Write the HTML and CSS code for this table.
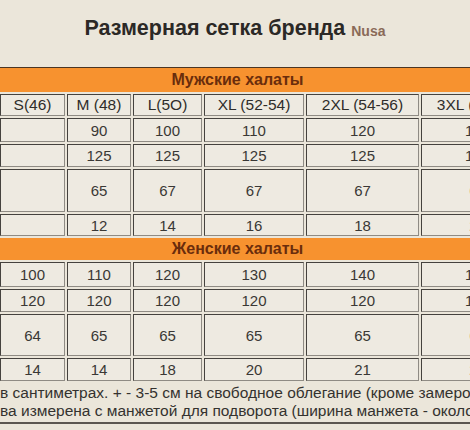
FILE: index.html
```html
<!DOCTYPE html>
<html lang="ru">
<head>
<meta charset="utf-8">
<title>Размерная сетка бренда Nusa</title>
<link rel="stylesheet" href="styles.css">
</head>
<body>
<div class="page">
  <h1 class="title">Размерная сетка бренда <span class="brand">Nusa</span></h1>
  <div class="sheet">
    <table class="sizes">
      <colgroup>
        <col class="c0"><col class="c1"><col class="c2"><col class="c3"><col class="c4"><col class="c5"><col class="c6">
      </colgroup>
      <tbody>
        <tr class="band band-men"><th colspan="7">Мужские халаты</th></tr>
        <tr class="head">
          <td></td><td>S(46)</td><td>M (48)</td><td>L(5O)</td><td>XL (52-54)</td><td>2XL (54-56)</td><td>3XL (56-58)</td>
        </tr>
        <tr class="r-a"><td></td><td></td><td>90</td><td>100</td><td>110</td><td>120</td><td>130</td></tr>
        <tr class="r-b"><td></td><td></td><td>125</td><td>125</td><td>125</td><td>125</td><td>125</td></tr>
        <tr class="r-c"><td></td><td></td><td>65</td><td>67</td><td>67</td><td>67</td><td>67</td></tr>
        <tr class="r-d"><td></td><td></td><td>12</td><td>14</td><td>16</td><td>18</td><td>20</td></tr>
        <tr class="band band-women"><th colspan="7">Женские халаты</th></tr>
        <tr class="r-e"><td></td><td>100</td><td>110</td><td>120</td><td>130</td><td>140</td><td>150</td></tr>
        <tr class="r-f"><td></td><td>120</td><td>120</td><td>120</td><td>120</td><td>120</td><td>120</td></tr>
        <tr class="r-g"><td></td><td>64</td><td>65</td><td>65</td><td>65</td><td>65</td><td>66</td></tr>
        <tr class="r-h"><td></td><td>14</td><td>14</td><td>18</td><td>20</td><td>21</td><td>22</td></tr>
      </tbody>
    </table>
    <div class="notes">
      <p class="note">в сантиметрах. + - 3-5 см на свободное облегание (кроме замеров</p>
      <p class="note">ва измерена с манжетой для подворота (ширина манжета - около</p>
    </div>
  </div>
</div>
</body>
</html>
```
FILE: styles.css
```css
html, body {
  margin: 0;
  padding: 0;
  overflow: hidden;
  background: #ebe6da;
}
.page {
  width: 470px;
  height: 430px;
  overflow: hidden;
  font-family: "Liberation Sans", Arial, sans-serif;
  color: #333;
}
.title {
  margin: 0;
  height: 67px;
  display: flex;
  align-items: center;
  justify-content: center;
  font-size: 21.5px;
  font-weight: bold;
  color: #2b2926;
  padding-bottom: 10px;
  box-sizing: border-box;
}
.brand {
  font-size: 14px;
  color: #8a6a58;
  margin-left: 6px;
  align-self: center;
  padding-top: 5px;
}
.sheet {
  border-top: 1px solid #4b3522;
  border-bottom: 2px solid #5b5650;
  height: 357px;
  box-sizing: border-box;
}
.sizes {
  border-collapse: separate;
  border-spacing: 2px;
  margin-left: -61px;
  margin-top: -2px;
  table-layout: fixed;
  width: 596px;
  font-size: 15px;
}
.c0 { width: 57px; }
.c1 { width: 65px; }
.c2 { width: 64px; }
.c3 { width: 69px; }
.c4 { width: 100px; }
.c5 { width: 113px; }
.c6 { width: 113px; }
.sizes td {
  background: #eeeae1;
  border: 1px solid;
  border-color: #45423e #8f8b84 #8f8b84 #45423e;
  text-align: center;
  padding: 0;
  color: #3a3835;
  white-space: nowrap;
  box-sizing: border-box;
}
.band th {
  background: #f7922f;
  color: #6a2d0c;
  font-size: 16px;
  font-weight: bold;
  text-align: center;
  padding: 0;
  border: 0;
}
.band-men th { height: 24px; }
.band-women th { height: 22px; }
.head td { height: 22px; font-size: 15.5px; color: #2f2d2a; }
.r-a td { height: 24px; }
.r-b td { height: 23px; }
.r-c td { height: 43px; }
.r-d td { height: 22px; }
.r-e td { height: 25px; }
.r-f td { height: 23px; }
.r-g td { height: 42px; }
.r-h td { height: 23px; }
.notes {
  padding-top: 1px;
  white-space: nowrap;
  overflow: hidden;
}
.note {
  margin: 0;
  font-size: 15.5px;
  line-height: 18px;
  color: #34322f;
}
```
